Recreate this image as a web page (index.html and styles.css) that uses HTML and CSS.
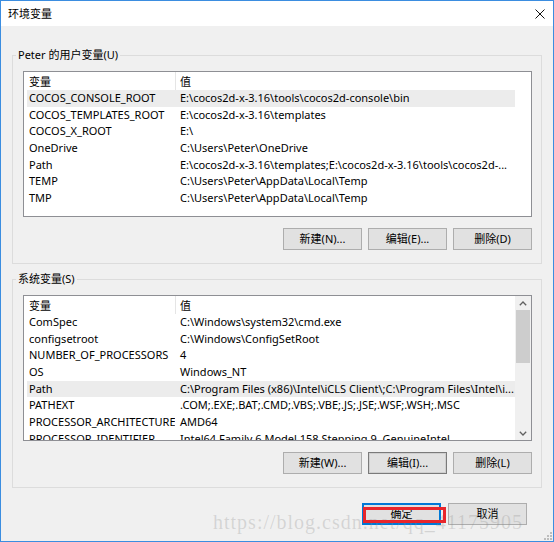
FILE: index.html
```html
<!DOCTYPE html>
<html lang="zh-CN">
<head>
<meta charset="utf-8">
<title>环境变量</title>
<link rel="stylesheet" href="styles.css">
</head>
<body>
<div class="window">
  <div class="titlebar">
    <span class="title">环境变量</span>
    <svg class="close" width="10" height="10" viewBox="0 0 10 10"><path d="M0.5 0.5L9.5 9.5M9.5 0.5L0.5 9.5" stroke="#111" stroke-width="1" fill="none"/></svg>
  </div>
  <div class="content">
    <div class="group">
      <div class="group-title">Peter 的用户变量(U)</div>
      <div class="list">
        <div class="list-body">
          <div class="row head"><div class="c1">变量</div><div class="c2">值</div></div>
          <div class="row sel"><div class="c1">COCOS_CONSOLE_ROOT</div><div class="c2">E:\cocos2d-x-3.16\tools\cocos2d-console\bin</div></div>
          <div class="row"><div class="c1">COCOS_TEMPLATES_ROOT</div><div class="c2">E:\cocos2d-x-3.16\templates</div></div>
          <div class="row"><div class="c1">COCOS_X_ROOT</div><div class="c2">E:\</div></div>
          <div class="row"><div class="c1">OneDrive</div><div class="c2">C:\Users\Peter\OneDrive</div></div>
          <div class="row"><div class="c1">Path</div><div class="c2">E:\cocos2d-x-3.16\templates;E:\cocos2d-x-3.16\tools\cocos2d-...</div></div>
          <div class="row"><div class="c1">TEMP</div><div class="c2">C:\Users\Peter\AppData\Local\Temp</div></div>
          <div class="row"><div class="c1">TMP</div><div class="c2">C:\Users\Peter\AppData\Local\Temp</div></div>
        </div>
      </div>
      <div class="buttons">
        <div class="btn">新建(N)...</div>
        <div class="btn">编辑(E)...</div>
        <div class="btn">删除(D)</div>
      </div>
    </div>

    <div class="group sys">
      <div class="group-title">系统变量(S)</div>
      <div class="list">
        <div class="list-body">
          <div class="row head"><div class="c1">变量</div><div class="c2">值</div></div>
          <div class="row"><div class="c1">ComSpec</div><div class="c2">C:\Windows\system32\cmd.exe</div></div>
          <div class="row"><div class="c1">configsetroot</div><div class="c2">C:\Windows\ConfigSetRoot</div></div>
          <div class="row"><div class="c1">NUMBER_OF_PROCESSORS</div><div class="c2">4</div></div>
          <div class="row"><div class="c1">OS</div><div class="c2">Windows_NT</div></div>
          <div class="row sel"><div class="c1">Path</div><div class="c2">C:\Program Files (x86)\Intel\iCLS Client\;C:\Program Files\Intel\i...</div></div>
          <div class="row"><div class="c1">PATHEXT</div><div class="c2">.COM;.EXE;.BAT;.CMD;.VBS;.VBE;.JS;.JSE;.WSF;.WSH;.MSC</div></div>
          <div class="row"><div class="c1">PROCESSOR_ARCHITECTURE</div><div class="c2">AMD64</div></div>
          <div class="row"><div class="c1">PROCESSOR_IDENTIFIER</div><div class="c2">Intel64 Family 6 Model 158 Stepping 9, GenuineIntel</div></div>
        </div>
        <div class="scrollbar">
          <div class="arrow up"><svg width="8" height="5" viewBox="0 0 8 5"><path d="M0.8 4.2L4 1L7.2 4.2" stroke="#606060" stroke-width="1.3" fill="none"/></svg></div>
          <div class="thumb"></div>
          <div class="track"></div>
          <div class="arrow down"><svg width="8" height="5" viewBox="0 0 8 5"><path d="M0.8 0.8L4 4L7.2 0.8" stroke="#606060" stroke-width="1.3" fill="none"/></svg></div>
        </div>
      </div>
      <div class="buttons">
        <div class="btn">新建(W)...</div>
        <div class="btn focus">编辑(I)...</div>
        <div class="btn">删除(L)</div>
      </div>
    </div>

    <div class="footer">
      <div class="btn default">确定</div>
      <div class="btn">取消</div>
    </div>
  </div>

  <div class="watermark">https://blog.csdn.net/qq_41175905</div>
  <div class="annotation"></div>
  <svg class="grip" width="8" height="8" viewBox="0 0 8 8">
    <rect x="6" y="0" width="2" height="2" fill="#bdbdbd"/>
    <rect x="3" y="3" width="2" height="2" fill="#bdbdbd"/>
    <rect x="6" y="3" width="2" height="2" fill="#bdbdbd"/>
    <rect x="0" y="6" width="2" height="2" fill="#bdbdbd"/>
    <rect x="3" y="6" width="2" height="2" fill="#bdbdbd"/>
    <rect x="6" y="6" width="2" height="2" fill="#bdbdbd"/>
  </svg>
</div>
</body>
</html>
```

FILE: styles.css
```css
* { box-sizing: border-box; }
html, body { margin: 0; padding: 0; background: #ffffff; }
body {
  font-family: "Noto Sans", "Noto Sans CJK SC", sans-serif;
  font-size: 11px;
  color: #000;
}
.window {
  position: relative;
  width: 554px;
  height: 542px;
  border: 1px solid #3b8de0;
  background: #f0f0f0;
  overflow: hidden;
}
.titlebar {
  height: 25px;
  background: #ffffff;
  display: flex;
  align-items: center;
  justify-content: space-between;
  padding-left: 7px;
  padding-right: 8px;
}
.title { line-height: 16px; }
.close { display: block; }
.content {
  padding: 0 11px;
}
.group {
  margin-top: 29px;
  border: 1px solid #dcdcdc;
  padding: 0 9px 13px 10px;
}
.group.sys { margin-top: 15px; }
.group-title {
  width: fit-content;
  margin: -9px 0 0 -7px;
  padding: 0 2px;
  line-height: 16px;
  height: 16px;
  background: #f0f0f0;
}
.list {
  margin-top: 8px;
  height: 146px;
  border: 1px solid #8e8f94;
  background: #ffffff;
  display: flex;
  overflow: hidden;
}
.list-body {
  flex: 1;
  overflow: hidden;
}
.row {
  display: flex;
  width: 488px;
  margin-left: 3px;
  height: 16.67px;
  line-height: 16.67px;
  white-space: nowrap;
}
.row .c1 {
  width: 148px;
  padding-left: 2px;
  overflow: hidden;
}
.row .c2 {
  width: 340px;
  padding-left: 5px;
  overflow: hidden;
}
.row.head {
  height: 18px;
  line-height: 19px;
}
.row.head .c2 {
  border-left: 1px solid #e5e5e5;
  padding-left: 4px;
}
.row.sel { background: #ececec; }
.scrollbar {
  width: 16px;
  background: #f0f0f0;
  display: flex;
  flex-direction: column;
  padding: 0 1px;
}
.arrow {
  height: 14px;
  display: flex;
  align-items: center;
  justify-content: center;
}
.thumb {
  height: 53px;
  background: #cdcdcd;
}
.track { flex: 1; }
.buttons {
  margin-top: 11px;
  display: flex;
  justify-content: flex-end;
  gap: 6px;
}
.btn {
  width: 79px;
  height: 22px;
  border: 1px solid #adadad;
  background: #e1e1e1;
  text-align: center;
  line-height: 20px;
}
.btn.focus {
  border-color: #7a7a7a;
  box-shadow: inset 0 0 0 1px #cfcfcf;
}
.btn.default {
  border-color: #0078d7;
  box-shadow: inset 0 0 0 1px #0078d7;
}
.footer {
  margin-top: 15px;
  display: flex;
  justify-content: flex-end;
  gap: 7px;
  padding-right: 15px;
}
.watermark {
  position: absolute;
  left: 212px;
  top: 511px;
  font-family: "Liberation Serif", serif;
  font-size: 20px;
  line-height: 20px;
  letter-spacing: 1px;
  color: rgba(140, 140, 140, 0.28);
  white-space: nowrap;
}
.annotation {
  position: absolute;
  left: 362px;
  top: 506px;
  width: 83px;
  height: 16px;
  border: 3px solid #e8262c;
}
.grip {
  position: absolute;
  right: 1px;
  bottom: 1px;
}
```
